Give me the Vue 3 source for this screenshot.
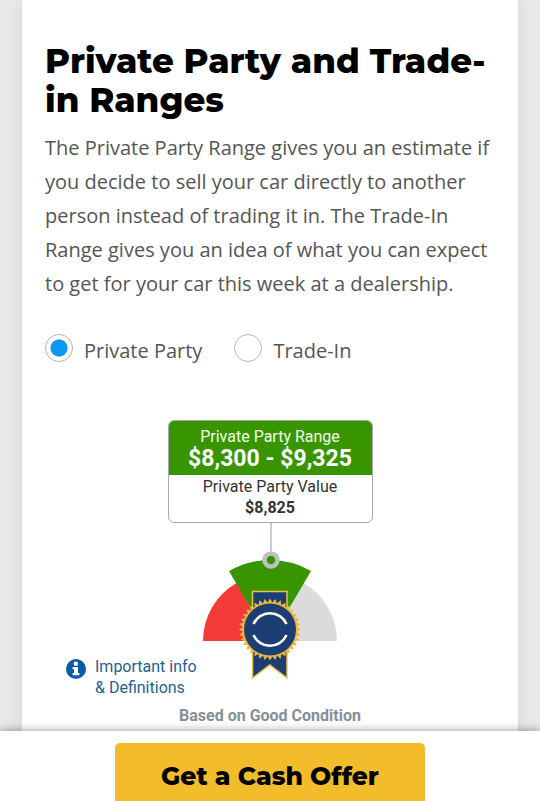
<template>
  <div class="page">
    <main class="card">
      <h1 class="title">Private Party and Trade-in Ranges</h1>
      <p class="intro">
        The Private Party Range gives you an estimate if you decide to sell your car directly to
        another person instead of trading it in. The Trade-In Range gives you an idea of what you
        can expect to get for your car this week at a dealership.
      </p>

      <div class="options" role="radiogroup" aria-label="Range type">
        <label v-for="item in options" :key="item.value" class="option" :for="item.value">
          <input
            :id="item.value"
            v-model="selected"
            class="radio"
            type="radio"
            name="range"
            :value="item.value"
          />
          <span class="option-text">{{ item.label }}</span>
        </label>
      </div>

      <!-- value box -->
      <section class="range-box">
        <div class="range-top">
          <div class="range-label">Private Party Range</div>
          <div class="range-price">$8,300 - $9,325</div>
        </div>
        <div class="range-bottom">
          <div>Private Party Value</div>
          <div class="value-price">$8,825</div>
        </div>
      </section>

      <!-- gauge -->
      <div class="gauge-row">
        <a class="info-link" href="#definitions">
          <svg class="info-icon" viewBox="0 0 20 20" aria-hidden="true">
            <circle cx="10" cy="10" r="10" fill="#0b5aa8" />
            <circle cx="9.8" cy="4.8" r="2.2" fill="#fff" />
            <path d="M6.600 8h5.400v6h1.400v2.200H6.600V14H8v-3.800H6.600z" fill="#fff" />
          </svg>
          <span>Important info<br />&amp; Definitions</span>
        </a>
        <svg class="gauge" viewBox="0 0 140 158" aria-hidden="true">
          <path d="M70 118H3A67 67 0 0 1 36.500 60z" fill="#f43b3a" />
          <path d="M70 118h67A67 67 0 0 0 103.500 60z" fill="#dbdbdb" />
          <path d="M70 118L29 48A82 82 0 0 1 111 48z" fill="#389500" />
          <path d="M71 0v30" stroke="#b4bcc4" stroke-width="1.500" />
          <circle cx="71" cy="37" r="6.500" fill="#389500" stroke="#c1c1c1" stroke-width="4.500" />
          <path
            d="M52.500 68.500h34.500v86.500l-17.200-13-17.300 13z"
            fill="#1d3e73"
            stroke="#ecc24d"
            stroke-width="1.500"
          />
          <polygon :points="teeth" fill="#ecb93f" />
          <circle cx="70" cy="106.500" r="26" fill="#1d3e73" />
          <path
            d="M53.500 101A18 18 0 0 1 86.500 101M53.500 112A18 18 0 0 0 86.500 112"
            fill="none"
            stroke="#fff"
            stroke-width="2.500"
          />
        </svg>
      </div>

      <p class="condition">Based on Good Condition</p>
    </main>

    <footer class="offer-bar">
      <button class="offer-btn" type="button">Get a Cash Offer</button>
    </footer>
  </div>
</template>

<script setup>
import { ref } from 'vue'

const options = [
  { value: 'private-party', label: 'Private Party' },
  { value: 'trade-in', label: 'Trade-In' },
]
const selected = ref('private-party')

// serrated edge of the rosette
const teeth = Array.from({ length: 72 }, (_, i) => {
  const r = i % 2 ? 27 : 31
  const a = (i * Math.PI) / 36
  return `${(70 + r * Math.cos(a)).toFixed(2)},${(106.5 + r * Math.sin(a)).toFixed(2)}`
}).join(' ')
</script>

<style>
body {
  background: #e8e8e8;
}
</style>

<style scoped>
.page {
  min-height: 100vh;
  padding: 0 22px;
  display: flex;
  flex-direction: column;
  box-sizing: border-box;
  overflow: hidden;
}

.card {
  flex: 1;
  padding: 42px 23px 70px;
  background: #fff;
  box-shadow: 0 0 14px rgba(0, 0, 0, 0.08);
  box-sizing: border-box;
}

.title {
  margin: 0 -12px 0 0;
  font-family: Montserrat, Inter, sans-serif;
  font-size: 34px;
  font-weight: 800;
  line-height: 39px;
  color: #000;
}

.intro {
  margin: 11px 0 0;
  font-family: 'Open Sans', sans-serif;
  font-size: 20px;
  line-height: 34px;
  color: #555;
}

.options {
  display: flex;
  gap: 32px;
  margin-top: 33px;
}

.option {
  display: flex;
  align-items: flex-start;
  gap: 11px;
  font-family: 'Open Sans', sans-serif;
  font-size: 20px;
  line-height: 28px;
  color: #555;
  cursor: pointer;
}

.option-text {
  padding-top: 3px;
}

.radio {
  appearance: none;
  width: 28px;
  height: 28px;
  margin: 0;
  border: 1px solid #b5b5b5;
  border-radius: 50%;
  background: #fff;
}

.radio:checked {
  background: radial-gradient(circle, #0d99f2 8px, #fff 9px);
}

.range-box {
  width: 205px;
  margin: 55px auto 0;
  border: 1px solid #a3abb1;
  border-radius: 6px;
  overflow: hidden;
  box-sizing: border-box;
  font-family: Roboto, sans-serif;
  font-size: 16px;
  line-height: 21px;
  text-align: center;
  color: #333;
}

.range-top {
  padding: 5px 0;
  background: #389500;
  color: #fff;
}

.range-label {
  color: #f0ffe8;
}

.range-price {
  font-size: 23px;
  font-weight: 700;
  line-height: 23px;
}

.range-bottom {
  padding: 1px 0 4px;
}

.value-price {
  font-weight: 700;
}

.gauge-row {
  display: grid;
  grid-template-columns: 1fr 140px 1fr;
}

.gauge {
  width: 140px;
  height: 158px;
}

.info-link {
  display: flex;
  align-items: flex-start;
  align-self: end;
  gap: 9px;
  padding: 133px 0 0 21px;
  font-family: Roboto, sans-serif;
  font-size: 16px;
  line-height: 21px;
  color: #1f5f91;
  text-decoration: none;
  white-space: nowrap;
}

.info-icon {
  flex: none;
  width: 20px;
  height: 20px;
  margin-top: 3px;
}

.condition {
  margin: 7px 0 0;
  font-family: Roboto, sans-serif;
  font-size: 16px;
  font-weight: 700;
  line-height: 21px;
  text-align: center;
  color: #848f96;
}

/* sticky call to action */
.offer-bar {
  position: fixed;
  right: 0;
  bottom: 0;
  left: 0;
  display: flex;
  justify-content: center;
  padding-top: 12px;
  background: #fff;
  box-shadow: 0 -1px 8px rgba(0, 0, 0, 0.35);
}

.offer-btn {
  width: 310px;
  padding: 13px 0 5px;
  border: 0;
  border-radius: 5px 5px 0 0;
  background: #f2bc2b;
  font-family: Montserrat, Inter, sans-serif;
  font-size: 25px;
  font-weight: 800;
  line-height: 40px;
  color: #000;
  cursor: pointer;
}
</style>
